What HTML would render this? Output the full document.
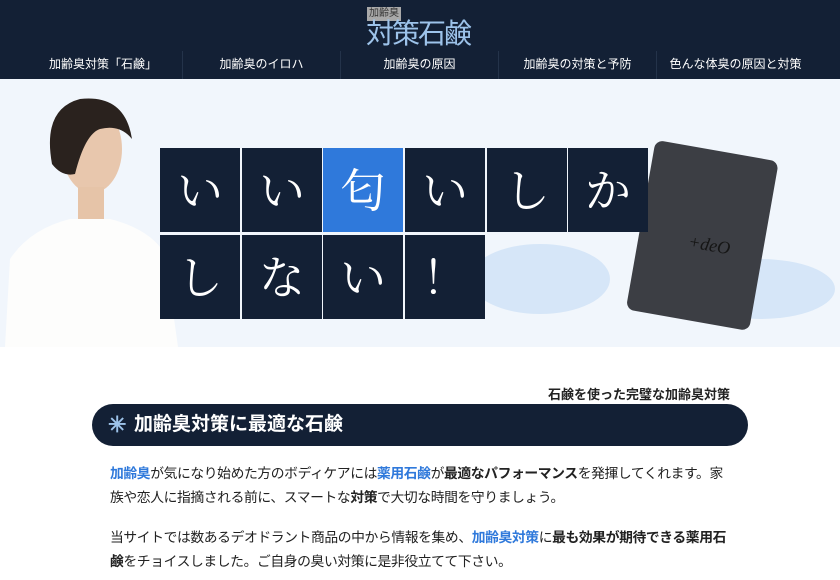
<!DOCTYPE html>
<html><head><meta charset="utf-8"><style>
*{margin:0;padding:0;box-sizing:border-box}
body{width:840px;height:580px;overflow:hidden;background:#fff;font-family:"Liberation Sans","Noto Sans CJK JP",sans-serif;color:#222}
.hd{position:absolute;left:0;top:0;width:840px;height:79px;background:#132035;box-shadow:0 2px 3px rgba(0,0,0,.3)}
.logo-s{position:absolute;left:367px;top:7px;width:34px;height:14px;background:#a9a9a9;color:#333;font-size:10px;line-height:14px;text-align:center}
.logo{position:absolute;left:366px;top:19px;font-size:28px;color:#9dc3ea;letter-spacing:-2px;line-height:30px}
.nav{position:absolute;top:51px;left:24px;display:flex}
.nav div{width:158px;height:28px;line-height:26px;text-align:center;color:#fff;font-size:12px;border-left:1px solid #24334a}
.nav div:first-child{border-left:none}
.hero{position:absolute;top:79px;left:0;width:840px;height:268px;background:#f1f6fc}
.t{position:absolute;width:80px;height:84px;background:#132035;color:#fff;font-family:"Noto Serif CJK SC","Liberation Serif",serif;font-size:46px;text-align:center;line-height:80px}
.b{background:#2f79db}
h2{position:absolute;left:92px;top:404px;width:656px;height:42px;background:#132035;border-radius:21px;color:#fff;font-size:19px;line-height:42px;padding-left:42px;font-weight:bold}
h2 span{position:absolute;left:16px;top:0;color:#9dc3ea;font-size:22px}
.sub{position:absolute;right:110px;top:384px;font-size:13px;font-weight:bold}
p{position:absolute;left:110px;width:660px;font-size:13.8px;line-height:24px;letter-spacing:-0.4px}
.l{color:#2f79db;font-weight:bold}
b{font-weight:bold}
</style></head><body>
<div class="hd">
<div class="logo-s">加齢臭</div>
<div class="logo">対策石鹸</div>
<div class="nav"><div>加齢臭対策「石鹸」</div><div>加齢臭のイロハ</div><div>加齢臭の原因</div><div>加齢臭の対策と予防</div><div>色んな体臭の原因と対策</div></div>
</div>
<div class="hero">
<svg width="840" height="268" style="position:absolute;left:0;top:0">
<path d="M5 268 L10 180 Q30 150 70 140 L110 140 Q150 150 165 175 L178 268Z" fill="#fdfdfc"/>
<ellipse cx="92" cy="70" rx="30" ry="44" fill="#e8c7ad"/>
<path d="M52 85 Q42 30 80 20 Q125 15 132 60 Q120 45 100 50 Q85 55 75 95 Q62 98 52 85Z" fill="#2a221e"/>
<rect x="78" y="108" width="26" height="32" fill="#e6c4a8"/>
<g fill="#c4dcf5" opacity=".6"><ellipse cx="540" cy="200" rx="70" ry="35"/><ellipse cx="760" cy="210" rx="75" ry="30"/></g>
<g transform="rotate(10 700 155)"><rect x="640" y="70" width="125" height="172" rx="8" fill="#3c3e44"/><text x="690" y="170" font-family="Liberation Serif" font-style="italic" font-size="18" fill="#151515">+deO</text></g>
</svg>
<div class="t" style="left:160px;top:69px">い</div>
<div class="t" style="left:242px;top:69px">い</div>
<div class="t b" style="left:323px;top:69px">匂</div>
<div class="t" style="left:405px;top:69px">い</div>
<div class="t" style="left:487px;top:69px">し</div>
<div class="t" style="left:568px;top:69px">か</div>
<div class="t" style="left:160px;top:156px">し</div>
<div class="t" style="left:242px;top:156px">な</div>
<div class="t" style="left:323px;top:156px">い</div>
<div class="t" style="left:405px;top:156px">！</div>
</div>
<div class="sub">石鹸を使った完璧な加齢臭対策</div>
<h2><span>✳</span>加齢臭対策に最適な石鹸</h2>
<p style="top:462px"><span class="l">加齢臭</span>が気になり始めた方のボディケアには<span class="l">薬用石鹸</span>が<b>最適なパフォーマンス</b>を発揮してくれます。家<br>族や恋人に指摘される前に、スマートな<b>対策</b>で大切な時間を守りましょう。</p>
<p style="top:526px">当サイトでは数あるデオドラント商品の中から情報を集め、<span class="l">加齢臭対策</span>に<b>最も効果が期待できる薬用石</b><br><b>鹸</b>をチョイスしました。ご自身の臭い対策に是非役立てて下さい。</p>
</body></html>
